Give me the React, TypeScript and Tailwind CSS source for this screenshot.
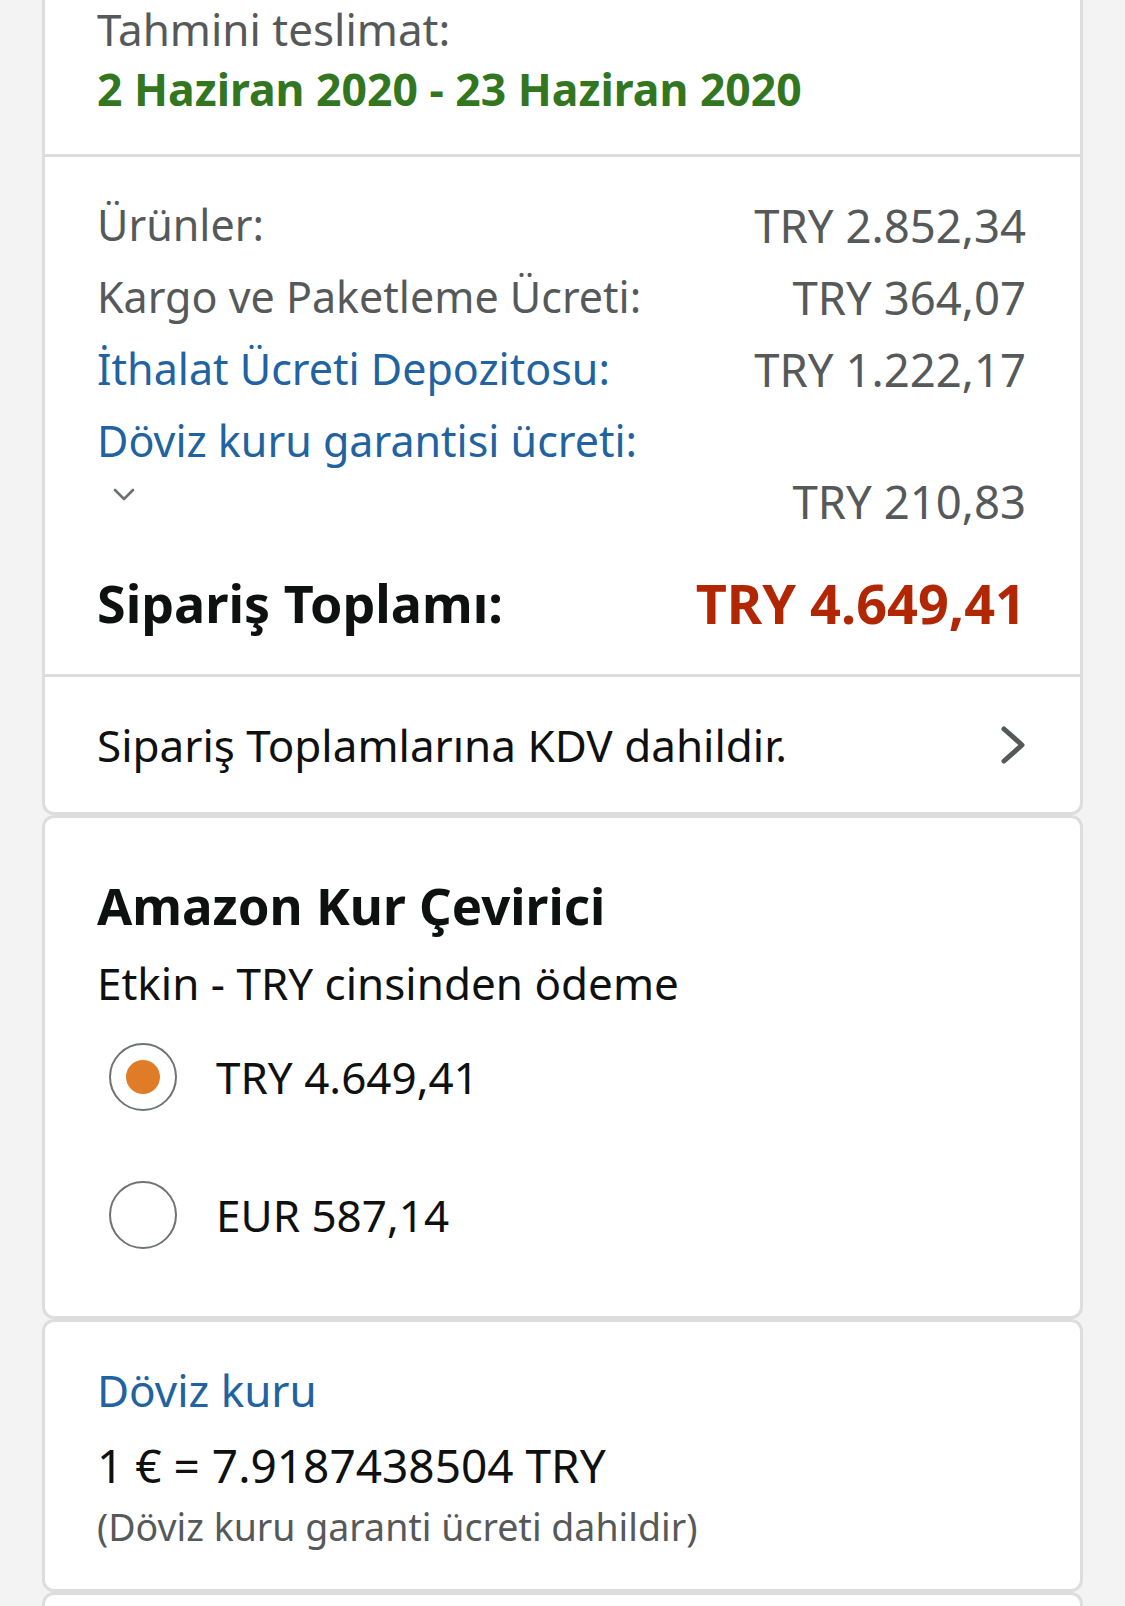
import React from "react";

type Line = {
  label: string;
  value: string;
  link?: boolean;
};

const lines: Line[] = [
  { label: "Ürünler:", value: "TRY 2.852,34" },
  { label: "Kargo ve Paketleme Ücreti:", value: "TRY 364,07" },
  { label: "İthalat Ücreti Depozitosu:", value: "TRY 1.222,17", link: true },
];

function ChevronDown() {
  return (
    <svg width="22" height="14" viewBox="0 0 22 14" fill="none">
      <polyline
        points="2,2 11,11 20,2"
        stroke="#6b6f6f"
        strokeWidth="2.6"
        strokeLinecap="round"
        strokeLinejoin="round"
      />
    </svg>
  );
}

function ChevronRight() {
  return (
    <svg width="26" height="40" viewBox="0 0 26 40" fill="none">
      <polyline
        points="4,4 22,20 4,36"
        stroke="#565959"
        strokeWidth="5"
        strokeLinecap="round"
        strokeLinejoin="round"
      />
    </svg>
  );
}

function Radio({ checked }: { checked?: boolean }) {
  return (
    <span className="flex h-[68px] w-[68px] items-center justify-center rounded-full border-[2.5px] border-[#6f7373] bg-white">
      {checked && <span className="h-[34px] w-[34px] rounded-full bg-[#e07c27]" />}
    </span>
  );
}

export default function App() {
  return (
    <div className="min-h-screen bg-[#f3f3f3] px-[42px] font-['Noto_Sans',sans-serif] text-[44px] text-[#0f1111]">
      {/* sipariş özeti */}
      <div className="rounded-b-[12px] border-[3px] border-t-0 border-[#dddddd] bg-white">
        <div className="h-[155px] px-[52px] leading-[60px]">
          <p className="-mt-px text-[#565959]">Tahmini teslimat:</p>
          <p className="text-[44.5px] font-bold text-[#32761f]">2 Haziran 2020 - 23 Haziran 2020</p>
        </div>

        <div className="border-t-[3px] border-[#dddddd] pb-[41px] pl-[52px] pr-[54px] pt-[38px]">
          <div className="space-y-3 leading-[60px]">
            {lines.map((line) => (
              <div key={line.label} className="flex justify-between">
                <span className={line.link ? "text-[43px] text-[#2162a1]" : "text-[43px] text-[#565959]"}>
                  {line.label}
                </span>
                <span className="text-[45.5px] text-[#565959]">{line.value}</span>
              </div>
            ))}
            <div className="flex items-end justify-between">
              <div>
                <p className="text-[43px] text-[#2162a1]">Döviz kuru garantisi ücreti:</p>
                <div className="flex h-[60px] items-center pb-[12px] pl-[16px]">
                  <ChevronDown />
                </div>
              </div>
              <span className="text-[45.5px] text-[#565959]">TRY 210,83</span>
            </div>
          </div>
          <div className="mt-[42px] flex justify-between font-bold leading-[60px]">
            <span className="text-[52px]">Sipariş Toplamı:</span>
            <span className="text-[54px] text-[#b12704]">TRY 4.649,41</span>
          </div>
        </div>

        <div className="flex h-[138px] items-center justify-between border-t-[3px] border-[#dddddd] pl-[52px] pr-[54px]">
          <span>Sipariş Toplamlarına KDV dahildir.</span>
          <ChevronRight />
        </div>
      </div>

      {/* kur çevirici */}
      <div className="rounded-[12px] border-[3px] border-[#dddddd] bg-white px-[52px] pb-[56px] pt-[57px]">
        <h2 className="text-[51px] font-bold leading-[60px]">Amazon Kur Çevirici</h2>
        <p className="mt-[18px] leading-[60px]">Etkin - TRY cinsinden ödeme</p>
        <div className="mt-[19px] space-y-[48px]">
          <label className="flex h-[90px] items-center gap-[39px] pl-[12px]">
            <Radio checked />
            <span>TRY 4.649,41</span>
          </label>
          <label className="flex h-[90px] items-center gap-[39px] pl-[12px]">
            <Radio />
            <span>EUR 587,14</span>
          </label>
        </div>
      </div>

      {/* döviz kuru */}
      <div className="rounded-[12px] border-[3px] border-[#dddddd] bg-white px-[52px] pb-[32px] pt-[38px]">
        <p className="leading-[60px] text-[#2162a1]">Döviz kuru</p>
        <p className="mt-[15px] text-[46px] leading-[60px]">1 € = 7.9187438504 TRY</p>
        <p className="mt-[2px] text-[37.5px] leading-[60px] text-[#565959]">
          (Döviz kuru garanti ücreti dahildir)
        </p>
      </div>

      <div className="h-[60px] rounded-t-[12px] border-[3px] border-b-0 border-[#dddddd] bg-white" />
    </div>
  );
}
